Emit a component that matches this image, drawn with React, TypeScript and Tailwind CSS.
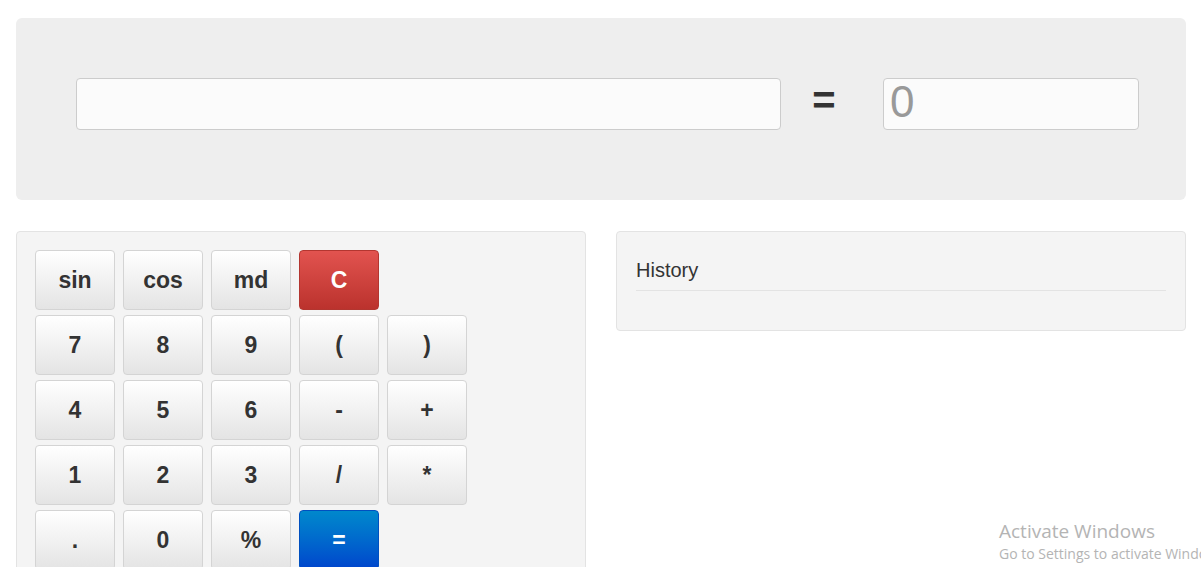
import React from 'react';

const rows: { label: string; kind?: 'danger' | 'primary' }[][] = [
  [{ label: 'sin' }, { label: 'cos' }, { label: 'md' }, { label: 'C', kind: 'danger' }],
  [{ label: '7' }, { label: '8' }, { label: '9' }, { label: '(' }, { label: ')' }],
  [{ label: '4' }, { label: '5' }, { label: '6' }, { label: '-' }, { label: '+' }],
  [{ label: '1' }, { label: '2' }, { label: '3' }, { label: '/' }, { label: '*' }],
  [{ label: '.' }, { label: '0' }, { label: '%' }, { label: '=', kind: 'primary' }],
];

function CalcButton({ label, kind }: { label: string; kind?: 'danger' | 'primary' }) {
  const base =
    'w-[80px] h-[60px] rounded-[4px] border text-[23px] font-bold flex items-center justify-center leading-none';
  if (kind === 'danger') {
    return (
      <button className={`${base} border-[#b33630] bg-gradient-to-b from-[#e2534f] to-[#bb322d] text-white`}>
        {label}
      </button>
    );
  }
  if (kind === 'primary') {
    return (
      <button className={`${base} border-[#0050c0] bg-gradient-to-b from-[#0088cc] to-[#0044cc] text-white`}>
        {label}
      </button>
    );
  }
  return (
    <button className={`${base} border-[#d4d4d4] bg-gradient-to-b from-[#ffffff] to-[#e4e4e4] text-[#333333]`}>
      {label}
    </button>
  );
}

export default function App() {
  return (
    <div
      className="relative w-[1201px] h-[567px] overflow-hidden bg-white text-[#333333]"
      style={{ fontFamily: '"Liberation Sans", Arial, sans-serif' }}
    >
      <div className="ml-4 w-[1170px] pt-[18px]">
        {/* Display */}
        <div className="h-[182px] rounded-[6px] bg-[#eeeeee] pt-[60px] pl-[60px] flex items-start">
          <div className="w-[705px] h-[52px] rounded-[4px] border border-[#cccccc] bg-[#fbfbfb]" />
          <div className="w-[86px] h-[52px] flex items-center justify-center text-[40px] font-bold leading-none pb-[8px]">
            =
          </div>
          <div className="ml-[16px] w-[256px] h-[52px] rounded-[4px] border border-[#cccccc] bg-[#fbfbfb] flex items-center pl-[6px] pb-[4px] text-[44px] leading-none text-[#999999]">
            0
          </div>
        </div>

        {/* Keypad + history */}
        <div className="mt-[31px] flex gap-[30px] items-start">
          <div className="w-[570px] h-[360px] rounded-[4px] border border-[#e3e3e3] bg-[#f4f4f4] px-[18px] pt-[18px]">
            <div className="flex flex-col gap-[5px]">
              {rows.map((row, i) => (
                <div key={i} className="flex gap-[8px]">
                  {row.map((b) => (
                    <CalcButton key={b.label} label={b.label} kind={b.kind} />
                  ))}
                </div>
              ))}
            </div>
          </div>

          <div className="w-[570px] rounded-[4px] border border-[#e3e3e3] bg-[#f4f4f4] px-[19px] pt-[27px] pb-[19px]">
            <h4 className="text-[20px] leading-[22px] text-[#333333]">History</h4>
            <hr className="mt-[9px] mb-[20px] border-t border-[#e3e3e3]" />
          </div>
        </div>
      </div>

      {/* Windows watermark */}
      <div
        className="absolute left-[999px] top-[518px] text-[#b4b4b4] whitespace-nowrap"
        style={{ fontFamily: '"Open Sans", "Noto Sans", sans-serif' }}
      >
        <div className="text-[19px] leading-[26px]">Activate Windows</div>
        <div className="text-[14px] leading-[20px]">Go to Settings to activate Windows.</div>
      </div>
    </div>
  );
}
